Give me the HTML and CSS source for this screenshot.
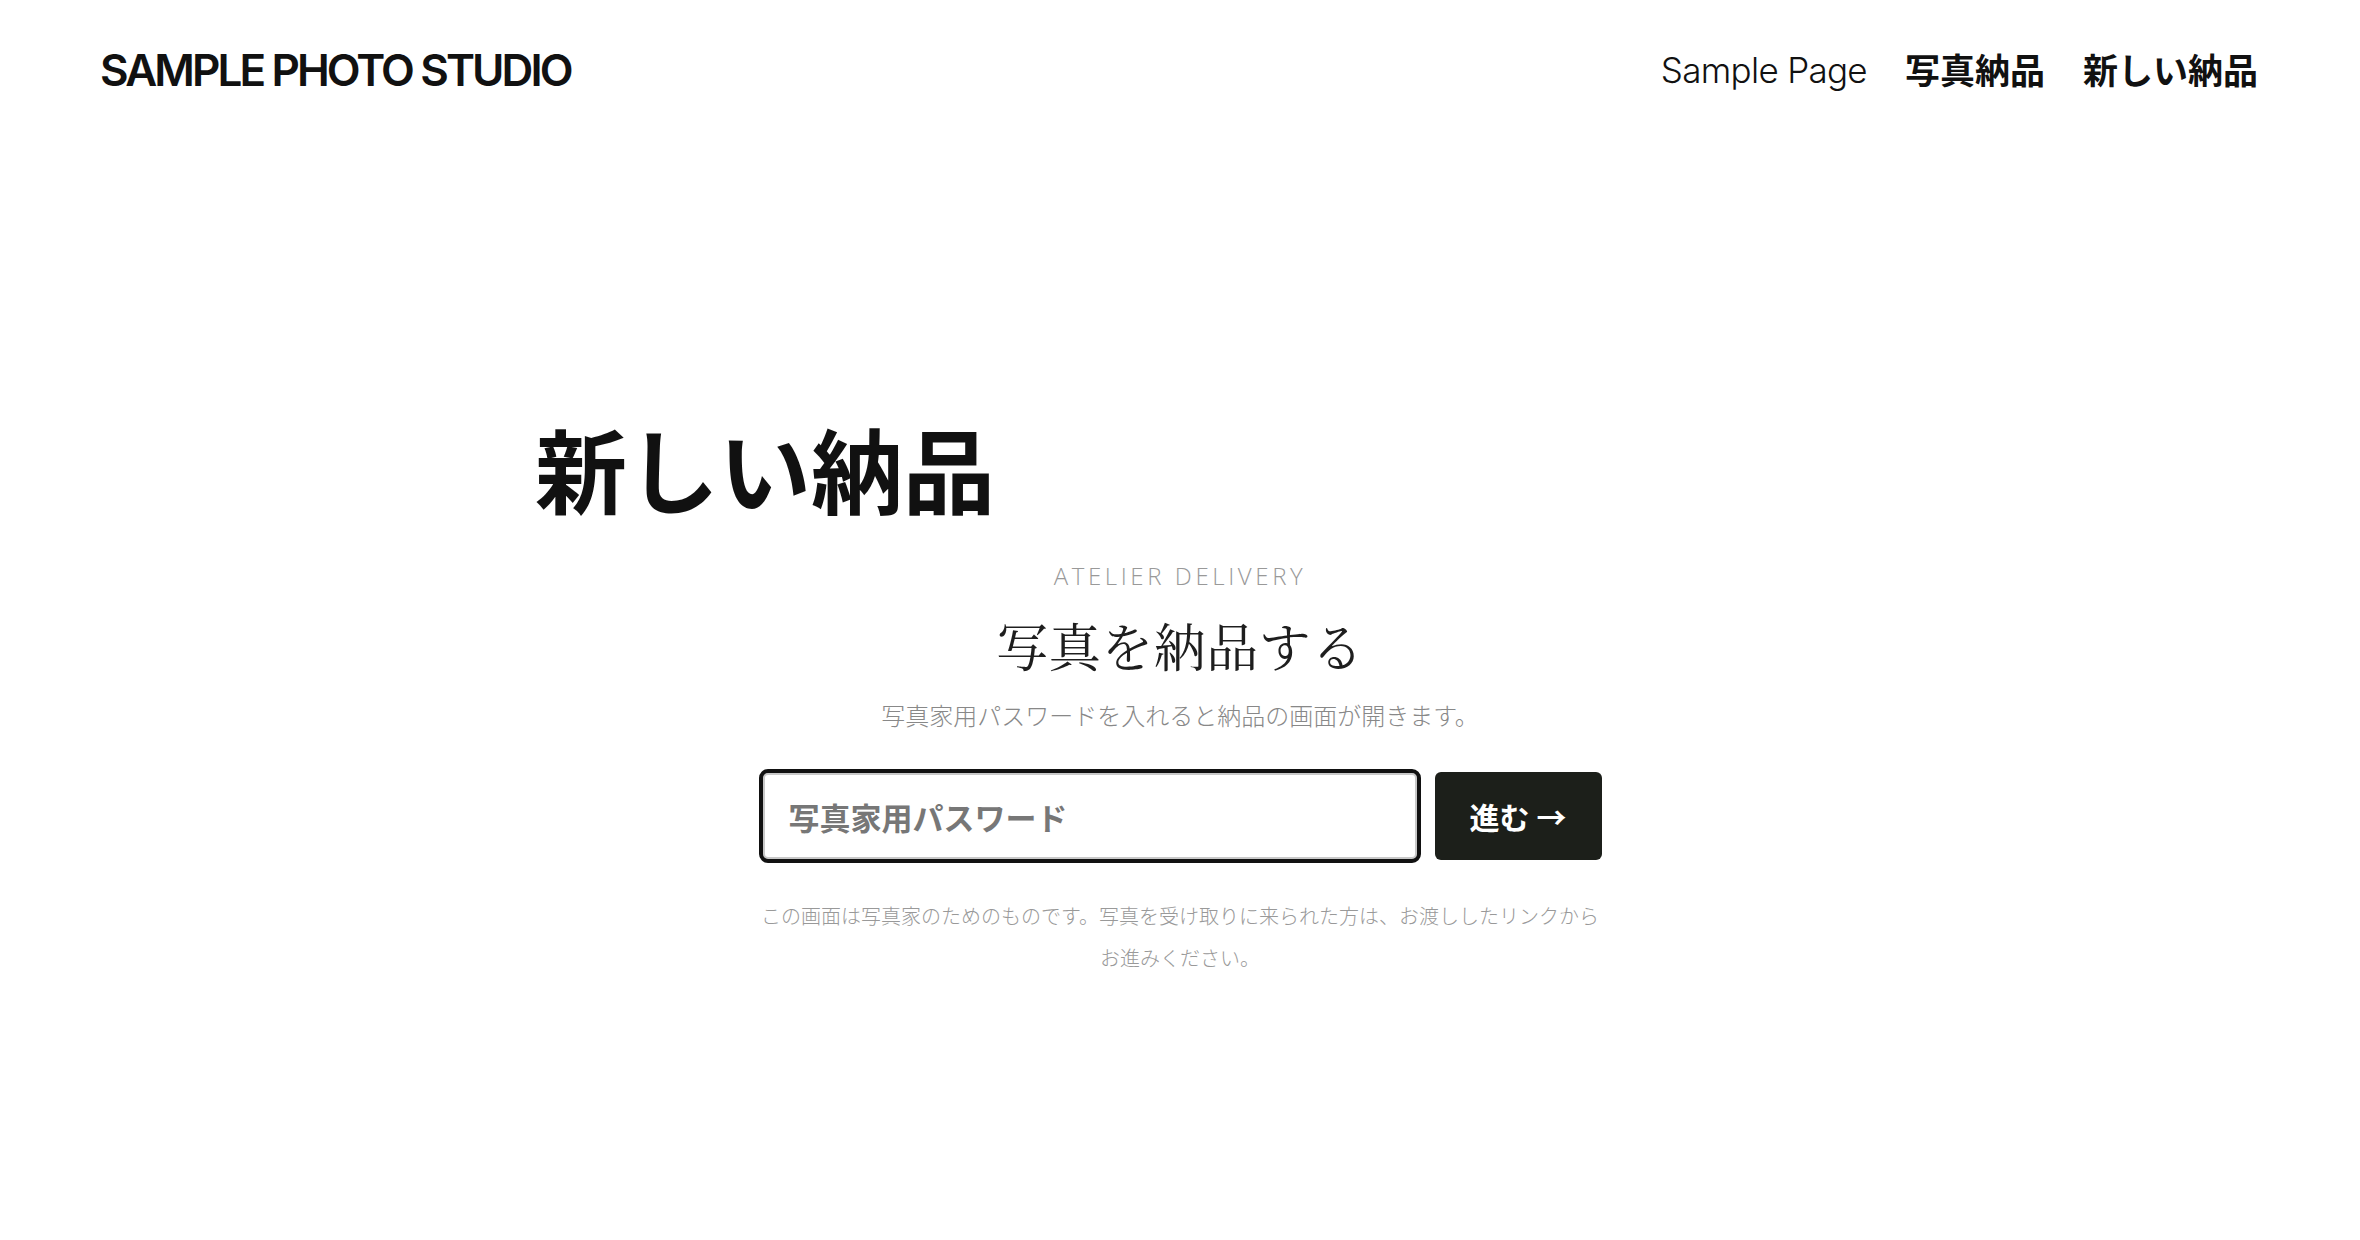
FILE: index.html
```html
<!DOCTYPE html>
<html lang="ja">
<head>
<meta charset="utf-8">
<title>新しい納品 – SAMPLE PHOTO STUDIO</title>
<link rel="stylesheet" href="styles.css">
</head>
<body>
<header class="site-header">
  <a class="logo" href="#">SAMPLE PHOTO STUDIO</a>
  <nav class="nav">
    <a class="nav-link nav-light" href="#">Sample Page</a>
    <a class="nav-link nav-bold" href="#">写真納品</a>
    <a class="nav-link nav-bold" href="#">新しい納品</a>
  </nav>
</header>
<main class="main">
  <h1 class="page-title">新しい納品</h1>
  <section class="delivery">
    <p class="eyebrow">ATELIER DELIVERY</p>
    <h2 class="delivery-title">写真を納品する</h2>
    <p class="delivery-lead">写真家用パスワードを入れると納品の画面が開きます。</p>
    <form class="delivery-form">
      <input class="pw-input" type="password" placeholder="写真家用パスワード">
      <button class="pw-button" type="button">進む →</button>
    </form>
    <p class="delivery-note">この画面は写真家のためのものです。写真を受け取りに来られた方は、お渡ししたリンクからお進みください。</p>
  </section>
</main>
</body>
</html>
```

FILE: styles.css
```css
* { box-sizing: border-box; }
html, body { margin: 0; padding: 0; background: #fff; }
body {
  font-family: Inter, "Noto Sans CJK JP", sans-serif;
  color: #111;
}
a { color: inherit; text-decoration: none; }

.site-header {
  display: flex;
  align-items: center;
  justify-content: space-between;
  height: 140px;
  padding: 0 102px 0 100px;
}
.logo {
  font-family: Inter, sans-serif;
  font-weight: 600;
  font-size: 44px;
  letter-spacing: -0.066em;
  color: #111;
}
.nav {
  display: flex;
  align-items: center;
  gap: 38px;
}
.nav-link { font-size: 35px; color: #111; }
.nav-light { font-family: Inter, sans-serif; font-weight: 300; letter-spacing: -0.02em; }
.nav-bold { font-family: "Noto Sans CJK JP", sans-serif; font-weight: 700; position: relative; top: -2px; }

.main {
  width: 1290px;
  margin: 0 auto;
  padding-top: 272px;
}
.page-title {
  margin: 0;
  font-family: "Noto Sans CJK JP", sans-serif;
  font-weight: 700;
  font-size: 92px;
  line-height: 1.2;
  color: #111;
}
.delivery {
  width: 843px;
  margin: 38px auto 0;
  text-align: center;
}
.eyebrow {
  margin: 0;
  font-family: "Open Sans", sans-serif;
  font-weight: 300;
  font-size: 24px;
  letter-spacing: 0.15em;
  color: #999;
  line-height: 1.3;
}
.delivery-title {
  margin: 19px 0 0;
  font-family: "Noto Serif CJK JP", "Noto Serif JP", "IPAMincho", serif;
  font-weight: 400;
  font-size: 52px;
  letter-spacing: 0.01em;
  line-height: 1.3;
  color: #1e1e1e;
}
.delivery-lead {
  margin: 19px 0 0;
  font-family: "Noto Sans CJK JP", sans-serif;
  font-weight: 300;
  font-size: 24px;
  color: #888;
  line-height: 1.5;
}
.delivery-form {
  display: flex;
  gap: 14px;
  align-items: center;
  margin-top: 36px;
}
.pw-input {
  flex: 1 1 auto;
  min-width: 0;
  height: 94px;
  border: 4px solid #111;
  border-radius: 9px;
  box-shadow: inset 0 0 0 2px #c8c8c8;
  padding: 0 26px;
  font-family: "Noto Sans CJK JP", sans-serif;
  font-size: 31px;
  font-weight: 700;
  outline: none;
  background: #fff;
}
.pw-input::placeholder { color: #777; }
.pw-button {
  flex: 0 0 167px;
  width: 167px;
  height: 88px;
  border: 0;
  border-radius: 6px;
  background: #1c1f1a;
  color: #fff;
  font-family: "Noto Sans CJK JP", sans-serif;
  font-weight: 700;
  font-size: 30px;
  white-space: nowrap;
  padding: 0;
}
.delivery-note {
  margin: 32px 0 0;
  font-family: "Noto Sans CJK JP", sans-serif;
  font-weight: 300;
  font-size: 20px;
  line-height: 42px;
  color: #999;
}
```
